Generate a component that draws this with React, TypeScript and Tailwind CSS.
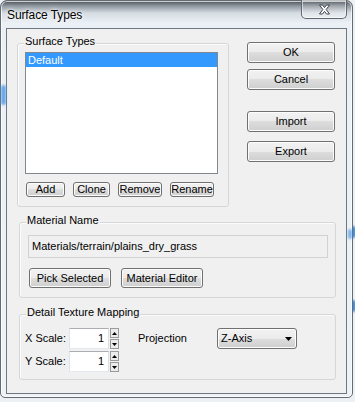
import React from 'react';

const btnFace =
  'flex items-center justify-center rounded-[3px] border border-[#707070] bg-[linear-gradient(#f2f2f2,#ebebeb_50%,#dddddd_50%,#cfcfcf)] shadow-[inset_0_0_0_1px_#fcfcfc] text-[11px] leading-none text-black';

function Btn({ label, className = '' }: { label: string; className?: string }) {
  return <button className={`${btnFace} ${className}`}>{label}</button>;
}

function GroupBox({
  title,
  className = '',
  children,
}: {
  title: string;
  className?: string;
  children: React.ReactNode;
}) {
  return (
    <div className={`relative rounded-[3px] border border-[#d3d7da] shadow-[inset_1px_1px_0_#fcfcfc] ${className}`}>
      <span className="absolute left-[6px] top-[-9px] bg-[#f0f0f0] px-[1px] text-[11px] leading-[13px] text-black">
        {title}
      </span>
      {children}
    </div>
  );
}

function SpinEdit({ value }: { value: string }) {
  return (
    <div className="flex items-start gap-[1px]">
      <div className="flex h-[21px] w-[40px] items-center justify-end border border-[#abadb3] border-b-[#e3e9ef] border-l-[#e2e3ea] border-r-[#dbdfe6] bg-white pr-[4px] text-[11px] leading-none">
        {value}
      </div>
      <div className="flex h-[21px] w-[9px] flex-col justify-between">
        <span className="flex h-[10px] items-center justify-center border border-[#9a9a9a] bg-[#ececec]">
          <svg width="5" height="3" viewBox="0 0 5 3">
            <path d="M2.5 0 L5 3 L0 3 Z" fill="#000" />
          </svg>
        </span>
        <span className="flex h-[10px] items-center justify-center border border-[#9a9a9a] bg-[#ececec]">
          <svg width="5" height="3" viewBox="0 0 5 3">
            <path d="M0 0 L5 0 L2.5 3 Z" fill="#000" />
          </svg>
        </span>
      </div>
    </div>
  );
}

export default function App() {
  return (
    <div className="relative h-[402px] w-[355px] overflow-hidden bg-[#eef1f4] font-['Liberation_Sans',Arial,sans-serif] text-black">
      {/* bits of other windows showing behind the glass */}
      <div className="absolute left-[350px] top-[226px] h-[12px] w-[6px] rounded-full bg-[#3d8de0] blur-[1px]" />
      <div className="absolute left-[350px] top-[300px] h-[12px] w-[6px] rounded-full bg-[#3d8de0] blur-[1px]" />

      <div className="relative h-[398px] w-[353px] rounded-t-[7px] rounded-b-[5px] border border-[#646b72] bg-[linear-gradient(180deg,#4b5259_0px,#8f979f_5px,#d5dce2_12px,#eaf0f5_22px,#edf2f6)] shadow-[inset_0_0_0_1px_rgba(255,255,255,0.7)]">
        <div className="absolute left-[0px] top-[84px] h-[20px] w-[5px] rounded-full bg-[#4a97e6] opacity-80 blur-[1px]" />
        <div className="absolute right-[0px] top-[228px] h-[10px] w-[4px] rounded-full bg-[#4a97e6] opacity-70 blur-[1px]" />

        {/* title bar */}
        <div className="flex h-[27px] items-center pl-[6px]">
          <span className="text-[12px] leading-none tracking-[-0.1px] [text-shadow:0_0_6px_#fff,0_0_3px_#fff]">
            Surface Types
          </span>
        </div>
        <div className="absolute right-[5px] top-[-1px] flex h-[19px] w-[46px] items-center justify-center rounded-b-[5px] border border-t-0 border-[#5f666e] bg-[linear-gradient(rgba(255,255,255,0.05),rgba(255,255,255,0.35))] shadow-[inset_0_0_0_1px_rgba(255,255,255,0.55)]">
          <svg width="13" height="11" viewBox="0 0 13 11">
            <path
              d="M1.5 1 L4.5 1 L6.5 3.6 L8.5 1 L11.5 1 L8.2 5.5 L11.5 10 L8.5 10 L6.5 7.4 L4.5 10 L1.5 10 L4.8 5.5 Z"
              fill="#fff"
              stroke="#3f454c"
              strokeWidth="1"
              strokeLinejoin="round"
            />
          </svg>
        </div>

        {/* client area */}
        <div className="mx-[5px] h-[366px] w-[341px] border border-[#6f7880] bg-[#f0f0f0]">
          <div className="flex items-start">
            <GroupBox title="Surface Types" className="ml-[10px] mt-[14px] h-[164px] w-[212px]">
              <div className="pl-[7px] pt-[8px]">
                <div className="h-[122px] w-[193px] border border-[#828790] bg-white">
                  <div className="flex h-[14px] items-center bg-[#3399ff] pl-[2px] text-[11px] leading-none text-white">
                    Default
                  </div>
                </div>
                <div className="ml-[1px] mt-[8px] flex gap-[8px]">
                  <Btn label="Add" className="h-[15px] w-[39px]" />
                  <Btn label="Clone" className="h-[15px] w-[37px]" />
                  <Btn label="Remove" className="h-[15px] w-[44px]" />
                  <Btn label="Rename" className="h-[15px] w-[44px]" />
                </div>
              </div>
            </GroupBox>

            <div className="ml-[18px] mt-[13px] flex flex-col">
              <Btn label="OK" className="h-[21px] w-[88px]" />
              <Btn label="Cancel" className="mt-[6px] h-[21px] w-[88px]" />
              <Btn label="Import" className="mt-[21px] h-[21px] w-[88px]" />
              <Btn label="Export" className="mt-[9px] h-[21px] w-[88px]" />
            </div>
          </div>

          <GroupBox title="Material Name" className="ml-[12px] mt-[15px] h-[76px] w-[317px]">
            <div className="pl-[8px] pt-[12px]">
              <div className="flex h-[23px] w-[300px] items-center border border-[#d2d2d2] bg-[#f0f0f0] pl-[3px] text-[11px] leading-none">
                Materials/terrain/plains_dry_grass
              </div>
              <div className="ml-[1px] mt-[10px] flex gap-[10px]">
                <Btn label="Pick Selected" className="h-[20px] w-[82px]" />
                <Btn label="Material Editor" className="h-[20px] w-[82px]" />
              </div>
            </div>
          </GroupBox>

          <GroupBox title="Detail Texture Mapping" className="ml-[12px] mt-[16px] h-[66px] w-[317px]">
            <div className="flex items-start pl-[5px] pt-[13px] text-[11px] leading-none">
              <div className="flex flex-col gap-[2px]">
                <div className="flex items-center">
                  <span className="w-[44px]">X Scale:</span>
                  <SpinEdit value="1" />
                </div>
                <div className="flex items-center">
                  <span className="w-[44px]">Y Scale:</span>
                  <SpinEdit value="1" />
                </div>
              </div>
              <span className="ml-[19px] flex h-[21px] w-[79px] items-center">Projection</span>
              <div className={`${btnFace} h-[21px] w-[80px] !justify-between pl-[3px] pr-[4px]`}>
                <span>Z-Axis</span>
                <svg width="7" height="4" viewBox="0 0 7 4">
                  <path d="M0 0 L7 0 L3.5 4 Z" fill="#000" />
                </svg>
              </div>
            </div>
          </GroupBox>
        </div>
      </div>
    </div>
  );
}
